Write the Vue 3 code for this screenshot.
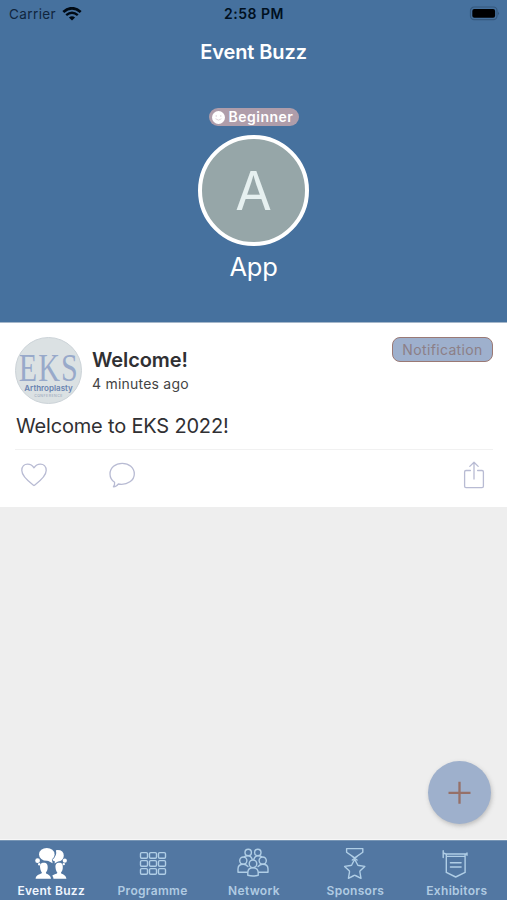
<script setup>
const tabs = [
  { id: 'buzz', label: 'Event Buzz', active: true },
  { id: 'programme', label: 'Programme' },
  { id: 'network', label: 'Network' },
  { id: 'sponsors', label: 'Sponsors' },
  { id: 'exhibitors', label: 'Exhibitors' }
]
const cells = [0, 1, 2, 3, 4, 5, 6, 7, 8]
</script>

<template>
  <div class="screen">
    <header class="hero">
      <div class="status">
        <div class="carrier">
          <span>Carrier</span>
          <svg width="20" height="14" viewBox="0 0 20 14">
            <path d="M1.3 5.1Q10-2.6 18.7 5.1" fill="none" stroke="#000a14" stroke-width="2.7" />
            <path d="M4.2 8.2Q10 3.1 15.8 8.2" fill="none" stroke="#000a14" stroke-width="2.4" />
            <path d="M6.9 10.5Q10 8 13.1 10.5L10 13.6Z" fill="#000a14" />
          </svg>
        </div>
        <span class="time">2:58 PM</span>
        <div class="power">
          <svg width="32" height="15" viewBox="0 0 32 15">
            <rect x="1.5" y="1" width="26.5" height="12.6" rx="3.6" fill="none" stroke="#35587c" stroke-width="1.2" />
            <rect x="3.3" y="2.9" width="22.8" height="8.8" rx="2" fill="#000" />
            <path d="M29.2 5.4q1.8 1.9 0 3.8Z" fill="#2f4f70" />
          </svg>
        </div>
      </div>
      <h1 class="title">Event Buzz</h1>
      <div class="level">
        <svg width="15" height="15" viewBox="0 0 15 15">
          <circle cx="7.5" cy="7.5" r="6.5" fill="#fff" />
          <circle cx="5.2" cy="6" r=".7" fill="#d5c9d1" />
          <circle cx="9.8" cy="6" r=".7" fill="#d5c9d1" />
          <path d="M4.5 8.7q3 2.9 6 0" fill="none" stroke="#d5c9d1" stroke-width=".8" />
        </svg>
        <span>Beginner</span>
      </div>
      <div class="avatar"><span>A</span></div>
      <div class="name">App</div>
    </header>

    <article class="post">
      <div class="post-head">
        <div class="logo">
          <span class="logo-main">EKS</span>
          <span class="logo-sub">Arthroplasty</span>
          <span class="logo-small">CONFERENCE</span>
        </div>
        <div class="meta">
          <h2>Welcome!</h2>
          <p>4 minutes ago</p>
        </div>
        <span class="tag">Notification</span>
      </div>
      <p class="body">Welcome to EKS 2022!</p>
      <div class="actions">
        <svg class="heart" width="28" height="26" viewBox="0 0 28 26">
          <path d="M14 23.6C9.2 19.8 1.8 14.7 1.8 8.5C1.8 4.5 4.4 2.1 7.6 2.1C10.4 2.1 12.6 3.6 14 5.8C15.4 3.6 17.6 2.1 20.4 2.1C23.6 2.1 26.2 4.5 26.2 8.5C26.2 14.7 18.8 19.8 14 23.6Z" />
        </svg>
        <svg class="comment" width="28" height="26" viewBox="0 0 28 26">
          <path d="M14.2 1.3C7.4 1.3 2 5.8 2 11.9C2 15.6 3.8 18.4 6.6 20.3C6.9 22 6.3 23.4 5.4 24.8C7.8 24.8 9.3 23.7 10.2 22C20 23.6 26.3 17.9 26.3 11.9C26.3 5.8 21 1.3 14.2 1.3Z" />
        </svg>
        <svg class="share" width="22" height="28" viewBox="0 0 22 28">
          <path d="M7.4 9.5H3Q1.6 9.5 1.6 10.9V25.2Q1.6 26.6 3 26.6H19Q20.4 26.6 20.4 25.2V10.9Q20.4 9.5 19 9.5H14.6M11 18V1.2M6.8 5.4L11 1.2L15.2 5.4" />
        </svg>
      </div>
    </article>

    <main class="feed">
      <button class="add" aria-label="Add">
        <svg width="24" height="24" viewBox="0 0 24 24"><path d="M11.5 .8V22.8M.5 11.8H22.5" stroke="#967068" stroke-width="2.3" /></svg>
      </button>
    </main>

    <nav class="tabs">
      <div v-for="tab in tabs" :key="tab.id" class="tab" :class="{ active: tab.active }">
        <svg v-if="tab.id === 'buzz'" width="36" height="34" viewBox="0 0 36 34">
          <g fill="#fff">
            <path d="M22.9 3.2Q30.8 2.4 30.8 8.8Q30.5 14 25 14.6L21.5 16.4L22 14.4Q20 14 19.3 12.8Q24.4 8.6 22.9 3.2Z" />
            <ellipse cx="13.8" cy="7.4" rx="7.8" ry="6.4" />
            <path d="M14 13.2L19.6 16.2L18.6 11Z" />
            <circle cx="4.6" cy="13.7" r="2.4" /><circle cx="6.2" cy="17.3" r="1.2" />
            <circle cx="31.8" cy="13.7" r="2.1" /><circle cx="30.8" cy="17.1" r="1.2" />
            <path d="M10.8 15.8c-3 0-4 2-3.7 4.8c.2 2.4 1 4 1.8 5c.3 2-5.9 1.3-6.3 6.2h15.4c-.4-4.8-5.4-4.2-5.1-6.2c1-1 1.8-2.7 1.8-5c.1-2.8-.9-4.8-3.9-4.8Z" />
            <path d="M26.2 15.8c-3 0-4 2-3.7 4.8c.2 2.4 1 4 1.8 5c.2 1.6-3 1.5-5 3.1q1 1.1 1.2 3.1h12.9c-.4-4.8-5.7-4.2-5.4-6.2c1-1 1.8-2.7 1.8-5c.1-2.8-.6-4.8-3.6-4.8Z" />
          </g>
        </svg>
        <svg v-else-if="tab.id === 'programme'" class="line" width="36" height="34" viewBox="0 0 36 34">
          <rect v-for="n in cells" :key="n" :x="6.5 + (n % 3) * 9" :y="5.6 + Math.floor(n / 3) * 8" width="7" height="5.6" rx="1.2" />
        </svg>
        <svg v-else-if="tab.id === 'network'" class="line" width="36" height="34" viewBox="0 0 36 34">
          <circle cx="13.2" cy="5.4" r="3.2" /><circle cx="22.8" cy="5.4" r="3.2" />
          <path d="M9.3 10.3Q9.8 8.8 13 8.8Q16 8.8 17.2 12.3M18.8 12.3Q20 8.8 23 8.8Q26.2 8.8 26.7 10.3" />
          <circle cx="8.3" cy="13.6" r="3.6" /><circle cx="27.7" cy="13.6" r="3.6" />
          <path d="M12.4 25.3H3V22Q3 17.3 8.3 17.3Q10.8 17.3 12.9 19.5M23.6 25.3H33V22Q33 17.3 27.7 17.3Q25.2 17.3 23.1 19.5" />
          <circle cx="18" cy="16.8" r="3.8" />
          <path d="M12.8 28.3V25.5Q13 20.8 18 20.8Q23 20.8 23.2 25.5V28.3Q18 29.7 12.8 28.3Z" />
        </svg>
        <svg v-else-if="tab.id === 'sponsors'" class="line" width="36" height="34" viewBox="0 0 36 34">
          <path d="M9.6 1.6H25.8V5.2L17.7 10.9L9.6 5.2ZM14.9 9.2L20.1 13M20.5 9.2L15.3 13" />
          <path d="M17.7 12.2L20.6 17.8Q21 18.5 21.8 18.5L27.8 19.4L23.2 23.8Q22.8 24.2 22.9 25L24 31.3L18.4 28.5Q17.7 28.1 17 28.5L11.4 31.3L12.5 25Q12.6 24.2 12.2 23.8L7.6 19.4L13.6 18.5Q14.4 18.5 14.8 17.8Z" />
        </svg>
        <svg v-else class="line" width="36" height="34" viewBox="0 0 36 34">
          <path d="M5.2 3.7V10.5M5.2 6L8 7H29M29 6V8.3M8.8 9.4H26.5M8.3 7.3V25.4L17.7 30L27.1 25.4V7.3M12.4 15.8H23.1M12.4 20H23.1" />
        </svg>
        <span>{{ tab.label }}</span>
      </div>
    </nav>
  </div>
</template>

<style>
body { margin: 0; }
</style>

<style scoped>
* { box-sizing: border-box; }
h1, h2, p { margin: 0; }
.screen { width: 507px; height: 900px; display: flex; flex-direction: column; background: #eee; font-family: Inter, "Liberation Sans", sans-serif; overflow: hidden; }
.hero { height: 322px; flex: none; background: #46719e; display: flex; flex-direction: column; align-items: center; color: #fff; }
.status { width: 100%; height: 28px; display: grid; grid-template-columns: 1fr auto 1fr; align-items: center; padding: 0 6px 1px 9px; color: #00101f; font-size: 13.5px; }
.carrier { display: flex; align-items: center; gap: 6px; color: #10253d; letter-spacing: .4px; }
.time { font-weight: 600; font-size: 14px; letter-spacing: .5px; margin-right: 2px; }
.power { display: flex; justify-content: flex-end; }
.title { height: 48px; line-height: 49px; font-size: 20px; font-weight: 600; letter-spacing: -.1px; }
.level { width: 90px; height: 18px; margin-top: 32px; display: flex; align-items: center; gap: 3px; padding-left: 2px; border-radius: 9px; background: #af9daa; font-size: 14px; line-height: 16px; font-weight: 600; letter-spacing: .5px; }
.level span { margin-top: -1px; }
.avatar { width: 111px; height: 111px; margin-top: 9px; border: 4px solid #fff; border-radius: 50%; background: #96a6a8; display: flex; align-items: center; justify-content: center; font-size: 53px; font-weight: 400; color: #e6f0f0; }
.name { margin-top: 5px; line-height: 32px; font-size: 25.5px; font-weight: 400; letter-spacing: -.2px; }
.post { height: 185px; flex: none; padding: 14px 14px 0 15px; background: #fff; border-top: 1px solid #a5b7ca; color: #303033; }
.post-head { display: flex; align-items: flex-start; height: 66px; }
.logo { width: 67px; height: 67px; flex: none; border-radius: 50%; background: #dbe1e3; border: 1px solid #ccd3d8; display: flex; flex-direction: column; align-items: center; overflow: hidden; white-space: nowrap; }
.logo-main { margin-top: 9px; line-height: 42px; height: 37px; padding-left: 2px; font-family: "Liberation Serif", serif; font-size: 40px; letter-spacing: 1.5px; transform: scaleX(.75); color: #98a9ca; }
.logo-sub { line-height: 9px; font-size: 8px; font-weight: 600; color: #6983b0; }
.logo-small { margin-top: 1px; line-height: 4px; font-size: 3.5px; letter-spacing: .5px; color: #929eb5; }
.meta { flex: 1; padding: 10px 0 0 10px; }
.meta h2 { line-height: 26px; font-size: 20px; font-weight: 600; letter-spacing: -.1px; }
.meta p { line-height: 21px; font-size: 14px; letter-spacing: .22px; color: #444; }
.tag { width: 101px; height: 25px; line-height: 23px; border: 1px solid #9a7975; border-radius: 8px; background: #9eb0cd; color: #8c7f87; text-align: center; font-size: 14px; letter-spacing: .35px; }
.body { height: 47px; padding: 10px 0 0 1px; line-height: 27px; border-bottom: 1px solid #f1f1f1; font-size: 20px; letter-spacing: -.18px; }
.actions { display: flex; align-items: flex-start; padding: 12px 8px 0 5px; }
.actions svg { fill: none; stroke: #b8bbd3; stroke-width: 1.3; stroke-linejoin: round; stroke-linecap: round; }
.comment { margin-left: 60px; }
.share { margin-left: auto; margin-top: -1px; }
.feed { flex: 1; display: flex; align-items: flex-end; justify-content: flex-end; padding: 0 16px 15px 0; border-bottom: 1px solid #f7f7f7; }
.add { width: 63px; height: 63px; padding: 0; border: 0; border-radius: 50%; background: #9eb0cc; display: flex; align-items: center; justify-content: center; box-shadow: 1px 2px 4px #8887; }
.tabs { height: 60px; flex: none; display: grid; grid-template-columns: repeat(5, 1fr); padding-top: 6px; border-top: 1px solid #7795b5; background: #5277a2; }
.tab { display: flex; flex-direction: column; align-items: center; color: #b0cbe2; font-size: 12px; font-weight: 600; letter-spacing: .3px; line-height: 16px; }
.tab span { margin-top: 2px; margin-left: 1px; }
.active { color: #f0f6ff; }
.line { fill: none; stroke: #b0cee6; stroke-width: 1.4; stroke-linejoin: round; stroke-linecap: round; }
</style>
